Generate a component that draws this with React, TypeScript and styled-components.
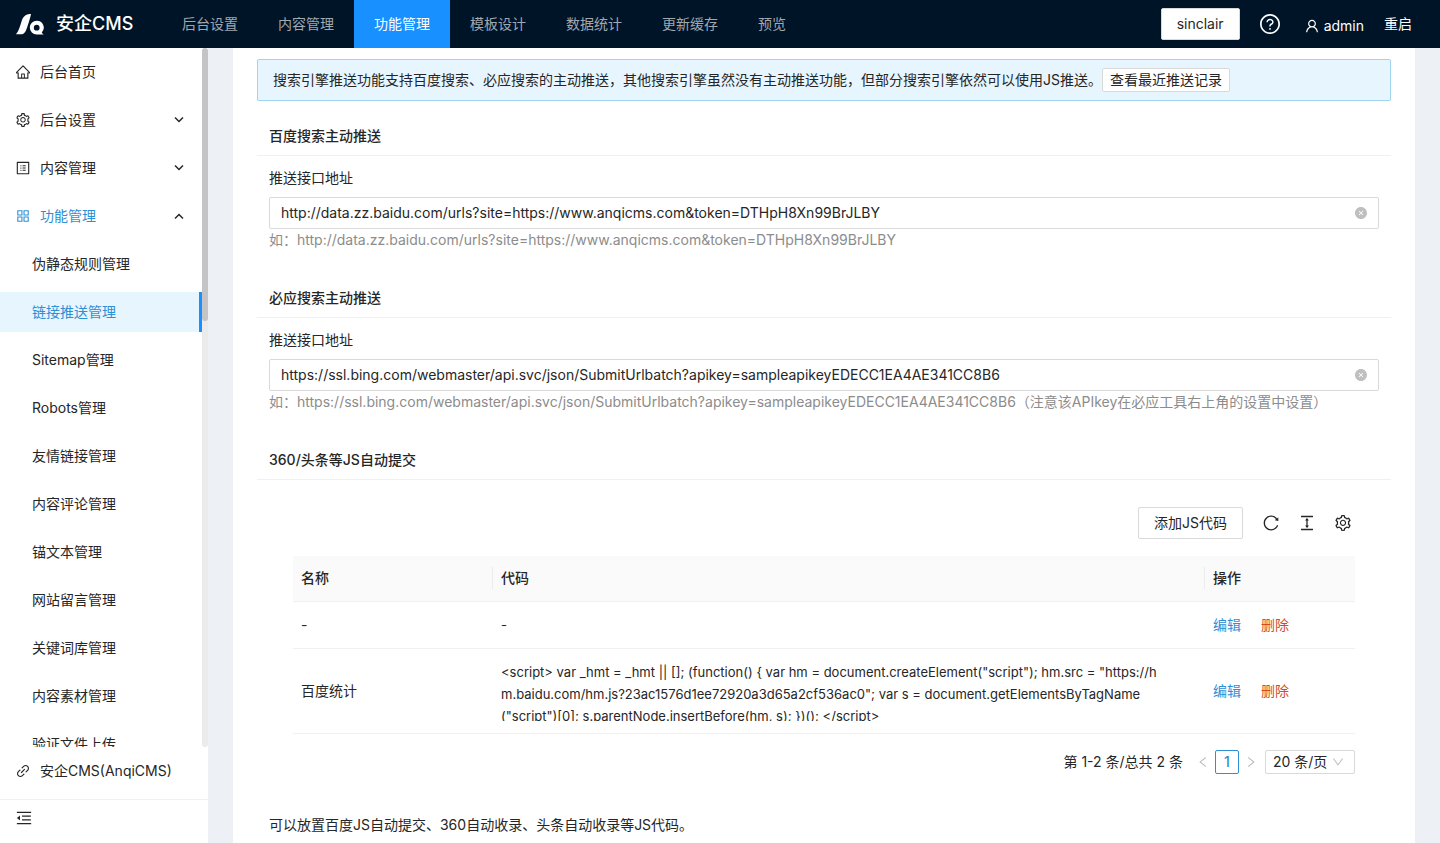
import React, { useState } from 'react';
import styled, { createGlobalStyle, css } from 'styled-components';
import {
  AiFillCloseCircle,
  AiOutlineAppstore,
  AiOutlineColumnHeight,
  AiOutlineDown,
  AiOutlineHome,
  AiOutlineLeft,
  AiOutlineLink,
  AiOutlineMenuFold,
  AiOutlineProfile,
  AiOutlineQuestionCircle,
  AiOutlineReload,
  AiOutlineRight,
  AiOutlineSetting,
  AiOutlineUser,
} from 'react-icons/ai';

const c = {
  navy: '#001428',
  primary: '#1890ff',
  link: '#2f8fd5',
  danger: '#d4491f',
  text: '#262626',
  muted: '#8c8c8c',
  line: '#f0f0f0',
  border: '#d9d9d9',
  page: '#edf1f5',
};

// Trims the built-in margin of the icon set so the glyph fills its box.
const iconBox = '64 64 896 896';

const GlobalStyle = createGlobalStyle`
  *, *::before, *::after { box-sizing: border-box; }
  body {
    margin: 0;
    background: ${c.page};
    color: ${c.text};
    font: 14px/22px Inter, "Noto Sans CJK SC", sans-serif;
  }
  button, input, select { font: inherit; color: inherit; }
  a { text-decoration: none; color: inherit; }
  svg { display: block; flex: none; }
`;

const Page = styled.div`
  display: flex;
  flex-direction: column;
  height: 100vh;
`;

const Header = styled.header`
  display: flex;
  align-items: center;
  flex: none;
  height: 48px;
  padding: 0 28px 0 16px;
  background: ${c.navy};
  color: #fff;
`;

const Brand = styled.a`
  display: flex;
  align-items: center;
  gap: 12px;
  width: 146px;
  font-size: 18px;
  font-weight: 500;
  white-space: nowrap;
`;

const TopNav = styled.nav`
  display: flex;
  flex: 1;
`;

const TopLink = styled.a<{ $active?: boolean }>`
  padding: 0 20px;
  line-height: 48px;
  white-space: nowrap;
  color: ${(p) => (p.$active ? '#fff' : '#a0a8b0')};
  background: ${(p) => (p.$active ? c.primary : 'transparent')};
`;

const HeaderActions = styled.div`
  display: flex;
  align-items: center;
  gap: 20px;
`;

const Button = styled.button<{ $small?: boolean }>`
  height: ${(p) => (p.$small ? 24 : 32)}px;
  padding: 0 ${(p) => (p.$small ? 7 : 15)}px;
  line-height: 22px;
  border: 1px solid ${c.border};
  border-radius: 2px;
  background: #fff;
  color: ${c.text};
  white-space: nowrap;
  cursor: pointer;
`;

const IconButton = styled.button`
  display: flex;
  padding: 0;
  border: 0;
  background: none;
  cursor: pointer;
`;

const UserLink = styled.a`
  display: flex;
  align-items: center;
  gap: 5px;
  padding: 4px 0 0 5px;
`;

const Body = styled.div`
  display: grid;
  grid-template-columns: 208px minmax(0, 1fr);
  flex: 1;
  min-height: 0;
`;

const Sidebar = styled.aside`
  display: flex;
  flex-direction: column;
  min-height: 0;
  background: #fff;
`;

const MenuScroll = styled.nav`
  position: relative;
  flex: 1;
  min-height: 0;
  padding-right: 6px;
  overflow: hidden;
`;

const ScrollTrack = styled.div`
  position: absolute;
  top: 0;
  right: 0;
  bottom: 0;
  width: 6px;
  border-radius: 3px;
  background: #ebebeb;
`;

const ScrollThumb = styled.div`
  height: 39%;
  border-radius: 3px;
  background: #c4c4c6;
`;

const MenuList = styled.ul`
  margin: 0;
  padding: 0;
  list-style: none;
`;

const menuRow = css`
  display: flex;
  align-items: center;
  width: 100%;
  height: 40px;
  margin: 4px 0 8px;
  white-space: nowrap;
`;

const MenuItem = styled.a`
  ${menuRow}
  gap: 10px;
  padding: 0 16px;
`;

const MenuToggle = styled.button<{ $open?: boolean }>`
  ${menuRow}
  gap: 10px;
  padding: 0 18px 0 16px;
  border: 0;
  background: none;
  color: ${(p) => (p.$open ? c.link : c.text)};
  cursor: pointer;
`;

const Chevron = styled.svg<{ $open?: boolean }>`
  margin-left: auto;
  color: ${c.text};
  transform: rotate(${(p) => (p.$open ? 180 : 0)}deg);
`;

const SubItem = styled.a<{ $active?: boolean }>`
  ${menuRow}
  padding-left: 32px;
  color: ${(p) => (p.$active ? c.link : c.text)};
  background: ${(p) => (p.$active ? '#e6f5fe' : 'transparent')};
  border-right: 3px solid ${(p) => (p.$active ? c.primary : 'transparent')};
`;

const MenuEntry = styled.li`
  display: flow-root;
  margin-bottom: -4px;
`;

const SidebarFooter = styled.div`
  flex: none;
  display: flow-root;
  padding-bottom: 7px;
`;

const FoldButton = styled.button`
  display: flex;
  align-items: center;
  width: 100%;
  height: 37px;
  padding: 0 16px;
  border: 0;
  border-top: 1px solid ${c.line};
  background: none;
  cursor: pointer;
`;

const Main = styled.main`
  min-width: 0;
  padding: 0 25px;
  overflow: hidden auto;
`;

const Card = styled.div`
  min-height: 100%;
  padding: 11px 24px 24px;
  background: #fff;
`;

const Alert = styled.div`
  display: flex;
  align-items: center;
  flex-wrap: wrap;
  min-height: 42px;
  margin-bottom: 16px;
  padding: 8px 15px;
  border: 1px solid #9fd5ef;
  border-radius: 2px;
  background: #e6f5fe;
`;

const SectionTitle = styled.h2`
  margin: 0;
  padding: 8px 12px;
  border-bottom: 1px solid ${c.line};
  font-size: 14px;
  line-height: 22px;
  font-weight: 500;
`;

const Field = styled.div`
  display: flex;
  flex-direction: column;
  padding: 11px 12px 28px;
`;

const Label = styled.label`
  margin-bottom: 8px;
`;

const InputWrap = styled.div`
  display: flex;
  align-items: center;
  height: 32px;
  padding: 0 11px;
  border: 1px solid ${c.border};
  border-radius: 2px;
`;

const TextInput = styled.input`
  flex: 1;
  min-width: 0;
  padding: 0;
  border: 0;
  outline: 0;
  background: none;
`;

const ClearButton = styled(IconButton)`
  color: #bfbfbf;
`;

const Help = styled.p`
  margin: 0;
  color: ${c.muted};
`;

const TableBlock = styled.div`
  padding: 27px 36px 40px;
`;

const Toolbar = styled.div`
  display: flex;
  align-items: center;
  justify-content: flex-end;
  gap: 20px;
  padding: 0 4px 17px 0;
`;

const Table = styled.table`
  width: 100%;
  table-layout: fixed;
  border-collapse: separate;
  border-spacing: 0;
`;

const Th = styled.th<{ $width?: number }>`
  width: ${(p) => (p.$width ? `${p.$width}px` : 'auto')};
  padding: 11px 0 12px;
  border-bottom: 1px solid ${c.line};
  background: #fafafa;
  font-weight: 500;
  text-align: left;
`;

const ThInner = styled.div<{ $divider?: boolean }>`
  padding: 0 8px;
  border-right: 1px solid ${(p) => (p.$divider ? '#ececec' : 'transparent')};
`;

const Td = styled.td`
  padding: 12px 8px;
  border-bottom: 1px solid ${c.line};
`;

const Code = styled.div`
  max-height: 60px;
  overflow: hidden;
  font-size: 13px;
  white-space: pre-line;
  overflow-wrap: anywhere;
`;

const RowActions = styled.div`
  display: flex;
  gap: 20px;
`;

const ActionLink = styled.a<{ $danger?: boolean }>`
  color: ${(p) => (p.$danger ? c.danger : c.link)};
`;

const Pagination = styled.nav`
  display: flex;
  align-items: center;
  justify-content: flex-end;
  padding-top: 16px;
`;

const Total = styled.span`
  margin-right: 8px;
`;

const PageArrow = styled.button`
  display: flex;
  align-items: center;
  justify-content: center;
  width: 24px;
  height: 24px;
  padding: 0;
  border: 0;
  background: none;
  color: #b8b8b8;
`;

const PageNumber = styled.button`
  width: 24px;
  height: 24px;
  padding: 0;
  border: 1px solid ${c.link};
  border-radius: 2px;
  background: #fff;
  color: ${c.link};
  font-weight: 500;
`;

const SelectWrap = styled.div`
  position: relative;
  margin-left: 2px;
`;

const Select = styled.select`
  display: block;
  appearance: none;
  width: 90px;
  height: 24px;
  padding: 0 7px;
  border: 1px solid ${c.border};
  border-radius: 2px;
  background: #fff;
`;

const SelectArrow = styled(AiOutlineDown)`
  position: absolute;
  top: 6px;
  right: 11px;
  color: #bfbfbf;
  pointer-events: none;
`;

const Note = styled.p`
  margin: 0;
  padding: 0 12px;
`;

const Logo = () => (
  <svg width="28" height="22" viewBox="0 0 28 22" fill="#fff" aria-hidden="true">
    <path d="M0 21.300C3 18 4 13 5.500 8.500C7 3.500 9.500 1 15 1C14.500 4 12.500 10.500 10.800 15.300C9.300 19.500 8 21.300 5 21.300Z" />
    <path
      fillRule="evenodd"
      d="M20.700 7.700A6.900 6.900 0 0 0 20.700 21.500H28C27 21.200 26.200 20.300 25.700 19.500A6.900 6.900 0 0 0 20.700 7.700ZM20.700 11.800A2.900 2.900 0 1 1 20.700 17.600A2.900 2.900 0 0 1 20.700 11.800Z"
    />
  </svg>
);

const MenuChevron = ({ open }: { open?: boolean }) => (
  <Chevron $open={open} width="10" height="10" viewBox="0 0 10 10" fill="none" aria-hidden="true">
    <path d="M1 2.500L5 6.500L9 2.500" stroke="currentColor" strokeWidth="1.500" />
  </Chevron>
);

const topLinks = ['后台设置', '内容管理', '功能管理', '模板设计', '数据统计', '更新缓存', '预览'];

const subItems = [
  '伪静态规则管理',
  '链接推送管理',
  'Sitemap管理',
  'Robots管理',
  '友情链接管理',
  '内容评论管理',
  '锚文本管理',
  '网站留言管理',
  '关键词库管理',
  '内容素材管理',
  '验证文件上传',
];

const rows = [
  { name: '-', code: '-' },
  {
    name: '百度统计',
    code: [
      '<script> var _hmt = _hmt || []; (function() { var hm = document.createElement("script"); hm.src = "https://h',
      'm.baidu.com/hm.js?23ac1576d1ee72920a3d65a2cf536ac0"; var s = document.getElementsByTagName',
      '("script")[0]; s.parentNode.insertBefore(hm, s); })(); </script>',
    ].join('\n'),
  },
];

interface PushFieldProps {
  id: string;
  title: string;
  initial: string;
  help: string;
}

const PushField = ({ id, title, initial, help }: PushFieldProps) => {
  const [value, setValue] = useState(initial);
  return (
    <section>
      <SectionTitle>{title}</SectionTitle>
      <Field>
        <Label htmlFor={id}>推送接口地址</Label>
        <InputWrap>
          <TextInput id={id} value={value} onChange={(e) => setValue(e.target.value)} />
          <ClearButton type="button" aria-label="清除" onClick={() => setValue('')}>
            <AiFillCloseCircle viewBox={iconBox} size={12} />
          </ClearButton>
        </InputWrap>
        <Help>{help}</Help>
      </Field>
    </section>
  );
};

export default function App() {
  return (
    <Page>
      <GlobalStyle />
      <Header>
        <Brand href="#">
          <Logo />
          安企CMS
        </Brand>
        <TopNav>
          {topLinks.map((label) => (
            <TopLink key={label} href="#" $active={label === '功能管理'}>
              {label}
            </TopLink>
          ))}
        </TopNav>
        <HeaderActions>
          <Button type="button">sinclair</Button>
          <IconButton type="button" aria-label="帮助">
            <AiOutlineQuestionCircle viewBox={iconBox} size={20} color="#fff" />
          </IconButton>
          <UserLink href="#">
            <AiOutlineUser viewBox={iconBox} size={14} />
            admin
          </UserLink>
          <a href="#">重启</a>
        </HeaderActions>
      </Header>
      <Body>
        <Sidebar>
          <MenuScroll>
            <MenuList>
              <MenuEntry>
                <MenuItem href="#">
                  <AiOutlineHome viewBox={iconBox} size={14} />
                  后台首页
                </MenuItem>
              </MenuEntry>
              <MenuEntry>
                <MenuToggle type="button" aria-expanded={false}>
                  <AiOutlineSetting viewBox={iconBox} size={14} />
                  后台设置
                  <MenuChevron />
                </MenuToggle>
              </MenuEntry>
              <MenuEntry>
                <MenuToggle type="button" aria-expanded={false}>
                  <AiOutlineProfile viewBox={iconBox} size={14} />
                  内容管理
                  <MenuChevron />
                </MenuToggle>
              </MenuEntry>
              <MenuEntry>
                <MenuToggle type="button" aria-expanded $open>
                  <AiOutlineAppstore viewBox={iconBox} size={14} />
                  功能管理
                  <MenuChevron open />
                </MenuToggle>
              </MenuEntry>
              {subItems.map((label) => (
                <MenuEntry key={label}>
                  <SubItem href="#" $active={label === '链接推送管理'}>
                    {label}
                  </SubItem>
                </MenuEntry>
              ))}
            </MenuList>
            <ScrollTrack>
              <ScrollThumb />
            </ScrollTrack>
          </MenuScroll>
          <SidebarFooter>
            <MenuItem href="#">
              <AiOutlineLink viewBox={iconBox} size={14} />
              安企CMS(AnqiCMS)
            </MenuItem>
            <FoldButton type="button" aria-label="收起菜单">
              <AiOutlineMenuFold viewBox={iconBox} size={16} />
            </FoldButton>
          </SidebarFooter>
        </Sidebar>
        <Main>
          <Card>
            <Alert>
              搜索引擎推送功能支持百度搜索、必应搜索的主动推送，其他搜索引擎虽然没有主动推送功能，但部分搜索引擎依然可以使用JS推送。
              <Button type="button" $small>
                查看最近推送记录
              </Button>
            </Alert>
            <PushField
              id="baidu-api"
              title="百度搜索主动推送"
              initial="http://data.zz.baidu.com/urls?site=https://www.anqicms.com&token=DTHpH8Xn99BrJLBY"
              help="如：http://data.zz.baidu.com/urls?site=https://www.anqicms.com&token=DTHpH8Xn99BrJLBY"
            />
            <PushField
              id="bing-api"
              title="必应搜索主动推送"
              initial="https://ssl.bing.com/webmaster/api.svc/json/SubmitUrlbatch?apikey=sampleapikeyEDECC1EA4AE341CC8B6"
              help="如：https://ssl.bing.com/webmaster/api.svc/json/SubmitUrlbatch?apikey=sampleapikeyEDECC1EA4AE341CC8B6（注意该APIkey在必应工具右上角的设置中设置）"
            />
            <section>
              <SectionTitle>360/头条等JS自动提交</SectionTitle>
              <TableBlock>
                <Toolbar>
                  <Button type="button">添加JS代码</Button>
                  <IconButton type="button" aria-label="刷新">
                    <AiOutlineReload viewBox={iconBox} size={16} />
                  </IconButton>
                  <IconButton type="button" aria-label="密度">
                    <AiOutlineColumnHeight viewBox={iconBox} size={16} />
                  </IconButton>
                  <IconButton type="button" aria-label="列设置">
                    <AiOutlineSetting viewBox={iconBox} size={16} />
                  </IconButton>
                </Toolbar>
                <Table>
                  <thead>
                    <tr>
                      <Th $width={200}>
                        <ThInner $divider>名称</ThInner>
                      </Th>
                      <Th>
                        <ThInner $divider>代码</ThInner>
                      </Th>
                      <Th $width={150}>
                        <ThInner>操作</ThInner>
                      </Th>
                    </tr>
                  </thead>
                  <tbody>
                    {rows.map((row) => (
                      <tr key={row.name}>
                        <Td>{row.name}</Td>
                        <Td>
                          <Code>{row.code}</Code>
                        </Td>
                        <Td>
                          <RowActions>
                            <ActionLink href="#">编辑</ActionLink>
                            <ActionLink href="#" $danger>
                              删除
                            </ActionLink>
                          </RowActions>
                        </Td>
                      </tr>
                    ))}
                  </tbody>
                </Table>
                <Pagination aria-label="分页">
                  <Total>第 1-2 条/总共 2 条</Total>
                  <PageArrow type="button" aria-label="上一页" disabled>
                    <AiOutlineLeft viewBox={iconBox} size={12} />
                  </PageArrow>
                  <PageNumber type="button">1</PageNumber>
                  <PageArrow type="button" aria-label="下一页" disabled>
                    <AiOutlineRight viewBox={iconBox} size={12} />
                  </PageArrow>
                  <SelectWrap>
                    <Select aria-label="每页条数" defaultValue="20">
                      <option value="20">20 条/页</option>
                      <option value="50">50 条/页</option>
                    </Select>
                    <SelectArrow viewBox={iconBox} size={12} />
                  </SelectWrap>
                </Pagination>
              </TableBlock>
            </section>
            <Note>可以放置百度JS自动提交、360自动收录、头条自动收录等JS代码。</Note>
          </Card>
        </Main>
      </Body>
    </Page>
  );
}
